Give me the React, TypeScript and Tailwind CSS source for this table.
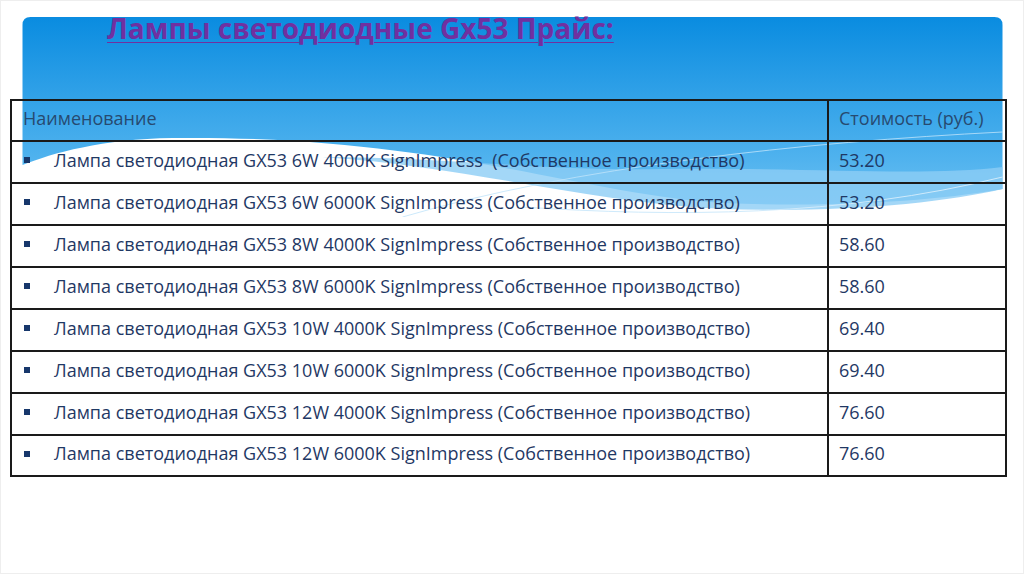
import React from 'react';

const rows = [
  { name: 'Лампа светодиодная GX53 6W 4000K SignImpress  (Собственное производство)', price: '53.20' },
  { name: 'Лампа светодиодная GX53 6W 6000K SignImpress (Собственное производство)', price: '53.20' },
  { name: 'Лампа светодиодная GX53 8W 4000K SignImpress (Собственное производство)', price: '58.60' },
  { name: 'Лампа светодиодная GX53 8W 6000K SignImpress (Собственное производство)', price: '58.60' },
  { name: 'Лампа светодиодная GX53 10W 4000K SignImpress (Собственное производство)', price: '69.40' },
  { name: 'Лампа светодиодная GX53 10W 6000K SignImpress (Собственное производство)', price: '69.40' },
  { name: 'Лампа светодиодная GX53 12W 4000K SignImpress (Собственное производство)', price: '76.60' },
  { name: 'Лампа светодиодная GX53 12W 6000K SignImpress (Собственное производство)', price: '76.60' },
];

function Banner() {
  return (
    <svg className="absolute left-[21px] top-[16px]" width="981" height="200" viewBox="0 0 980 200">
      <defs>
        <linearGradient id="sky" x1="0" y1="0" x2="0" y2="1">
          <stop offset="0" stopColor="#0a8ce0" />
          <stop offset="0.75" stopColor="#4fb2ee" />
          <stop offset="1" stopColor="#6cc0f2" />
        </linearGradient>
      </defs>
      <path
        d="M0,8 Q0,0 8,0 H972 Q980,0 980,8 V172 C900,186 800,190 700,186 C560,178 420,118 150,121 C80,122 30,136 0,148 Z"
        fill="url(#sky)"
      />
      <path
        d="M300,140 C450,150 560,185 700,192 C820,196 920,186 980,172 V150 C900,160 780,150 640,152 C520,154 420,140 300,140 Z"
        fill="#8ccdf5"
        opacity="0.8"
      />
      <path d="M500,190 C650,200 820,200 980,160" fill="none" stroke="#cfeafb" strokeWidth="1" />
      <path d="M380,200 C550,150 780,125 980,115" fill="none" stroke="#bfe3fa" strokeWidth="1" opacity="0.8" />
    </svg>
  );
}

export default function App() {
  return (
    <div
      className="relative w-[1024px] h-[574px] overflow-hidden bg-white border border-[#eeeeee] text-[#1f3864]"
      style={{ fontFamily: '"Open Sans", "Liberation Sans", sans-serif' }}
    >
      <Banner />
      <div className="relative flex flex-col">
        <h1 className="h-[98px] pl-[106px] pt-[11px] text-[28px] leading-[32px] font-bold text-[#7030a0] underline decoration-1 underline-offset-[3px]">
          Лампы светодиодные Gx53 Прайс:
        </h1>
        <div className="ml-[9px] w-[997px] border-2 border-[#1a1a1a]">
          <div className="flex h-[41px] border-b-2 border-[#1a1a1a]">
            <div className="w-[817px] flex items-center pl-[11px] pb-[4px] text-[18px] text-[#274a70] border-r-2 border-[#1a1a1a]">
              Наименование
            </div>
            <div className="flex-1 flex items-center pl-[10px] pb-[4px] text-[18px] text-[#274a70]">Стоимость (руб.)</div>
          </div>
          {rows.map((r, i) => (
            <div
              key={i}
              className={i < rows.length - 1 ? 'flex h-[42px] border-b-2 border-[#1a1a1a]' : 'flex h-[39px]'}
            >
              <div className="w-[817px] flex items-center pb-[4px] border-r-2 border-[#1a1a1a] text-[18px] whitespace-pre">
                <span className="ml-[12px] w-[6px] h-[6px] bg-[#17376b] mr-[24px]" />
                {r.name}
              </div>
              <div className="flex-1 flex items-center pl-[10px] pb-[4px] text-[18px]">{r.price}</div>
            </div>
          ))}
        </div>
      </div>
    </div>
  );
}
